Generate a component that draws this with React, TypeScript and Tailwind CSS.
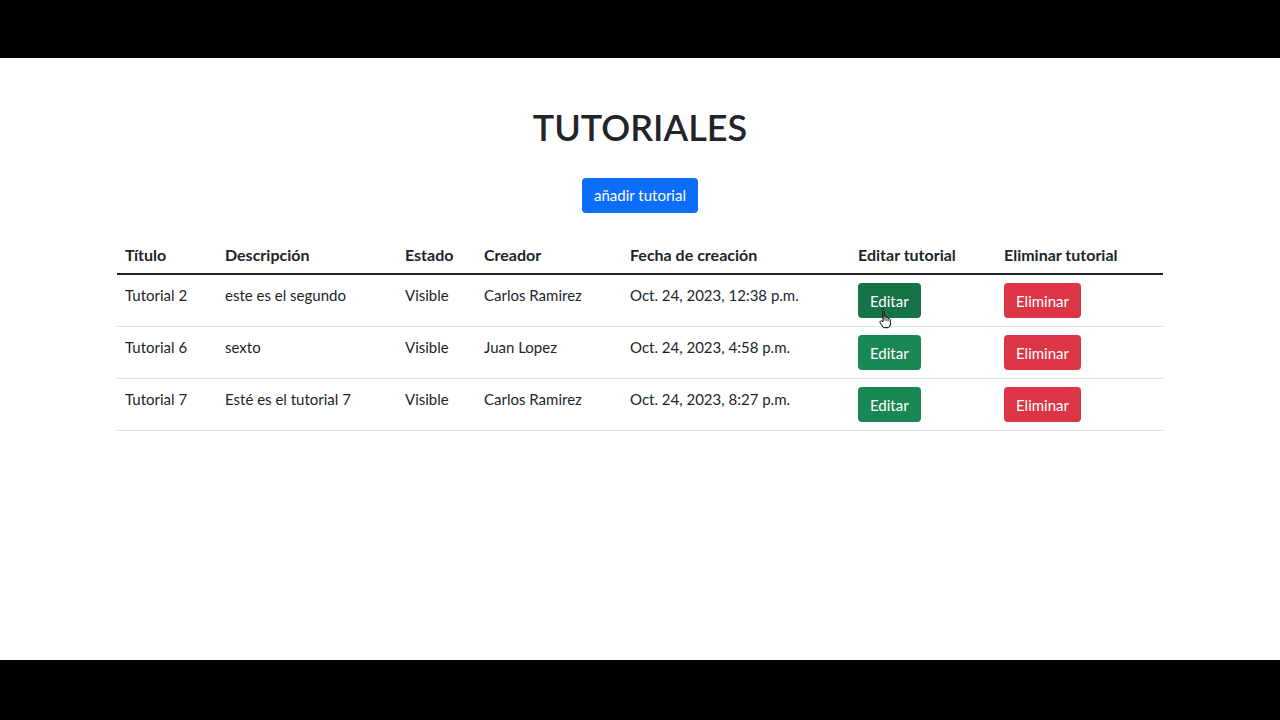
const rows = [
  { titulo: "Tutorial 2", desc: "este es el segundo", estado: "Visible", creador: "Carlos Ramirez", fecha: "Oct. 24, 2023, 12:38 p.m.", hover: true },
  { titulo: "Tutorial 6", desc: "sexto", estado: "Visible", creador: "Juan Lopez", fecha: "Oct. 24, 2023, 4:58 p.m." },
  { titulo: "Tutorial 7", desc: "Esté es el tutorial 7", estado: "Visible", creador: "Carlos Ramirez", fecha: "Oct. 24, 2023, 8:27 p.m." },
];

const heads = ["Título", "Descripción", "Estado", "Creador", "Fecha de creación", "Editar tutorial", "Eliminar tutorial"];
const widths = ["w-[100px]", "w-[180px]", "w-[79px]", "w-[146px]", "w-[228px]", "w-[146px]", "w-[167px]"];

const HandCursor = () => (
  <svg className="absolute left-[20px] top-[25px] pointer-events-none" width="15" height="21" viewBox="0 0 15 21">
    <path
      d="M4.5 1c.8 0 1.5.7 1.5 1.5V8l.4-.1c.8-.1 1.5.4 1.6 1.2V9.3l.3-.1c.8-.2 1.6.3 1.8 1.1v.3l.2-.1c.8-.2 1.6.3 1.8 1.2l.4 3c.2 1.6-.3 3.2-1.3 4.3l-.6.7H5.5L2.3 15.2c-.5-.7-.4-1.6.2-2.1.6-.5 1.5-.4 2 .2l.5.6V2.5C3 1.7 3.7 1 4.5 1z"
      fill="#fff"
      stroke="#000"
      strokeWidth="1"
      strokeLinejoin="round"
    />
    <path d="M6 8v4.5M8 9.3v3.7M10 10.6v2.6" stroke="#000" strokeWidth="0.8" />
  </svg>
);

export default function App() {
  return (
    <div className="flex flex-col h-screen bg-black text-[#212529] font-['Lato','Liberation_Sans',sans-serif]">
      <div className="h-[58px] bg-black" />
      <div className="h-[602px] bg-white flex flex-col items-center pt-[45px]">
        <h1 className="text-[36px] leading-[48px] font-semibold">TUTORIALES</h1>
        <button className="mt-[27px] h-[35px] px-3 rounded-[4px] bg-[#0d6efd] text-white text-[15px]">
          añadir tutorial
        </button>
        <table className="mt-[20px] w-[1046px] table-fixed border-collapse text-[15px] leading-6">
          <thead>
            <tr className="border-b-2 border-[#212529]">
              {heads.map((h, i) => (
                <th key={h} className={`${widths[i]} px-2 pt-[10px] pb-[6px] text-left text-[16px] font-bold`}>{h}</th>
              ))}
            </tr>
          </thead>
          <tbody>
            {rows.map((r) => (
              <tr key={r.titulo} className="border-b border-[#dee2e6] align-top">
                <td className="px-2 py-2">{r.titulo}</td>
                <td className="px-2 py-2">{r.desc}</td>
                <td className="px-2 py-2">{r.estado}</td>
                <td className="px-2 py-2">{r.creador}</td>
                <td className="px-2 py-2">{r.fecha}</td>
                <td className="px-2 py-2">
                  <div className="relative inline-block">
                    <button className={`h-[35px] px-3 rounded-[4px] text-white ${r.hover ? "bg-[#157347]" : "bg-[#198754]"}`}>
                      Editar
                    </button>
                    {r.hover && <HandCursor />}
                  </div>
                </td>
                <td className="px-2 py-2">
                  <button className="h-[35px] px-3 rounded-[4px] bg-[#dc3545] text-white">Eliminar</button>
                </td>
              </tr>
            ))}
          </tbody>
        </table>
      </div>
      <div className="flex-1 bg-black" />
    </div>
  );
}
